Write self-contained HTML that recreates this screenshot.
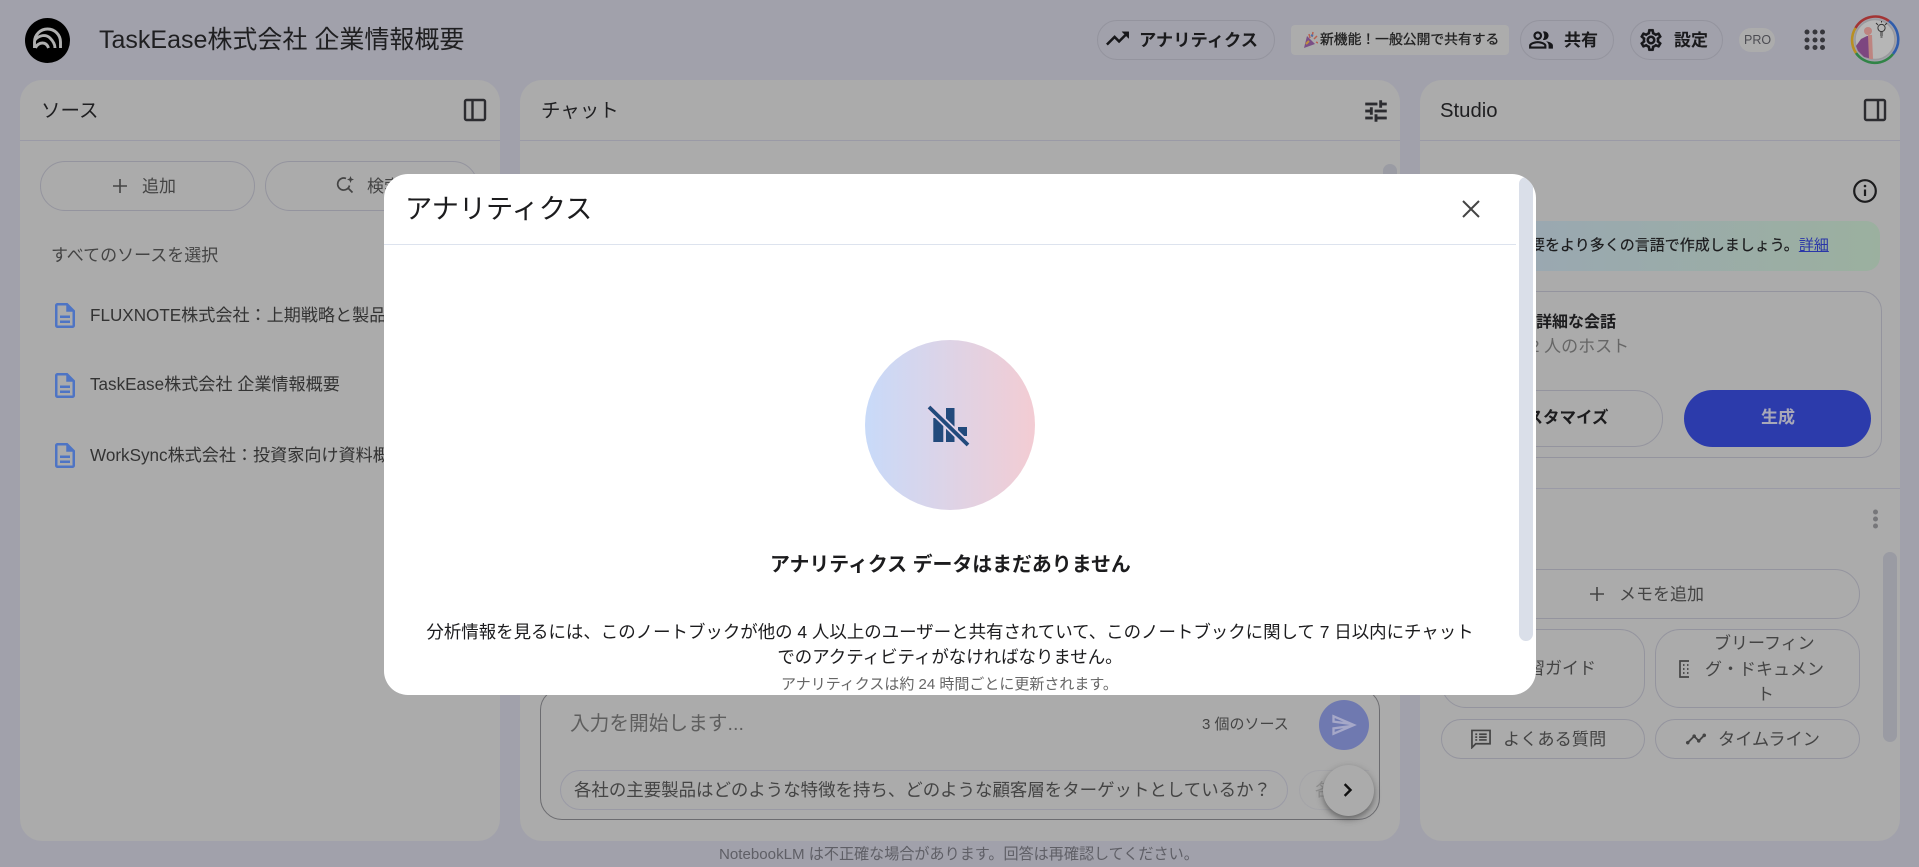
<!DOCTYPE html>
<html lang="ja">
<head>
<meta charset="utf-8">
<title>TaskEase株式会社 企業情報概要</title>
<style>
*{box-sizing:border-box;margin:0;padding:0}
html,body{width:1919px;height:867px;overflow:hidden;background:#a1a1ab;font-family:"Liberation Sans","Noto Sans CJK JP",sans-serif;color:#1c1c1e}
.a{position:absolute}
.t{position:absolute;white-space:nowrap;line-height:24px;height:24px}
.b{position:absolute;border:1px solid #94949e;border-radius:25px}
.p{position:absolute;background:#ababab}
.l{position:absolute;height:1px;background:#9a9aa6}
svg{position:absolute;display:block}
</style>
</head>
<body>
<!-- top bar -->
<svg style="left:25px;top:18px" width="45" height="45" viewBox="0 0 45 45"><circle cx="22.500" cy="22.500" r="22.500" fill="#000"/><g fill="none" stroke="#b0b0b0" stroke-width="2.900"><path d="M9.500 30v-6a13 13 0 0 1 26 0v6"/><path d="M10 22c4-5 11-6 15-2 3 3 5 6 5 10"/><path d="M10.500 30c1-3 4-5 7-5s5 2 6 5"/></g></svg>
<div class="t" style="left:99px;top:28px;font-size:25px;color:#1f1f21">TaskEase株式会社 企業情報概要</div>

<div class="b" style="left:1097px;top:20px;width:178px;height:40px"></div>
<svg style="left:1104px;top:25px;fill:#17171a;stroke:#17171a;stroke-width:.4" width="27" height="27" viewBox="0 0 24 24"><path d="M16 6l2.290 2.290-4.880 4.880-4-4L2 16.590 3.410 18l6-6 4 4 6.300-6.290L22 12V6z"/></svg>
<div class="t" style="left:1139px;top:28px;font-size:17.300px;font-weight:700;color:#1a1a1c">アナリティクス</div>

<div class="a" style="left:1291px;top:25px;width:218px;height:30px;background:#acacac;border-radius:4px"></div>
<svg style="left:1303px;top:31px" width="15" height="18" viewBox="0 0 15 18"><path d="M1 17l3-12 8 8z" fill="#7a4f86"/><path d="M6 3l1 4M10 1l-1 5M14 5l-3 3M13 11l2 1" stroke="#b8604f" stroke-width="1.500"/><path d="M3 13l3-3" stroke="#c09040" stroke-width="2"/><path d="M8 4l2 1" stroke="#4a70b0" stroke-width="2"/></svg>
<div class="t" style="left:1320px;top:28px;font-size:13.800px;color:#222;-webkit-text-stroke:.3px #222">新機能！一般公開で共有する</div>

<div class="b" style="left:1520px;top:20px;width:94px;height:40px"></div>
<svg style="left:1528px;top:27px;fill:#17171a" width="26" height="26" viewBox="0 0 24 24"><path d="M16.670 13.130C18.040 14.060 19 15.320 19 17v3h4v-3c0-2.180-3.570-3.470-6.330-3.870zM15 12c2.210 0 4-1.790 4-4s-1.790-4-4-4c-.47 0-.91.1-1.330.24C14.500 5.270 15 6.580 15 8s-.5 2.730-1.330 3.760c.42.14.86.24 1.330.24zM9 12c2.210 0 4-1.790 4-4s-1.790-4-4-4-4 1.790-4 4 1.790 4 4 4zm0-6c1.100 0 2 .9 2 2s-.9 2-2 2-2-.9-2-2 .9-2 2-2zM9 13c-2.670 0-8 1.340-8 4v3h16v-3c0-2.660-5.330-4-8-4zm6 5H3v-.99C3.200 16.290 6.300 15 9 15s5.800 1.290 6 2v1z"/></svg>
<div class="t" style="left:1564px;top:29px;font-size:17px;font-weight:700;color:#1a1a1c">共有</div>

<div class="b" style="left:1630px;top:20px;width:93px;height:40px"></div>
<svg style="left:1638px;top:27px;fill:#17171a;stroke:#17171a;stroke-width:.35" width="26" height="26" viewBox="0 0 24 24"><path d="M19.430 12.980c.04-.32.07-.64.07-.98 0-.34-.03-.66-.07-.98l2.110-1.650c.19-.15.24-.42.12-.64l-2-3.460c-.09-.16-.26-.25-.44-.25-.06 0-.12.01-.17.03l-2.490 1c-.52-.4-1.080-.73-1.690-.98l-.38-2.650C14.460 2.180 14.250 2 14 2h-4c-.25 0-.46.18-.49.42l-.38 2.650c-.61.25-1.170.59-1.690.98l-2.490-1c-.06-.02-.12-.03-.18-.03-.17 0-.34.09-.43.25l-2 3.460c-.13.22-.07.49.12.64l2.110 1.650c-.04.32-.07.65-.07.98 0 .33.03.66.07.98l-2.110 1.650c-.19.15-.24.42-.12.64l2 3.460c.09.16.26.25.44.25.06 0 .12-.01.17-.03l2.490-1c.52.4 1.080.73 1.690.98l.38 2.650c.03.24.24.42.49.42h4c.25 0 .46-.18.49-.42l.38-2.650c.61-.25 1.170-.59 1.690-.98l2.490 1c.06.02.12.03.18.03.17 0 .34-.09.43-.25l2-3.460c.12-.22.07-.49-.12-.64l-2.110-1.650zm-1.980-1.710c.04.31.05.52.05.73 0 .21-.02.43-.05.73l-.14 1.130.89.7 1.080.84-.7 1.210-1.270-.51-1.040-.42-.9.68c-.43.32-.84.56-1.250.73l-1.060.43-.16 1.130-.2 1.350h-1.400l-.19-1.350-.16-1.130-1.060-.43c-.43-.18-.83-.41-1.230-.71l-.91-.7-1.060.43-1.270.51-.7-1.210 1.080-.84.89-.7-.14-1.130c-.03-.31-.05-.54-.05-.74s.02-.43.05-.73l.14-1.130-.89-.7-1.080-.84.7-1.210 1.270.51 1.040.42.9-.68c.43-.32.84-.56 1.250-.73l1.060-.43.16-1.130.2-1.350h1.390l.19 1.350.16 1.130 1.060.43c.43.18.83.41 1.230.71l.91.7 1.060-.43 1.270-.51.7 1.210-1.070.85-.89.7.14 1.130zM12 8c-2.210 0-4 1.790-4 4s1.790 4 4 4 4-1.790 4-4-1.790-4-4-4zm0 6c-1.100 0-2-.9-2-2s.9-2 2-2 2 .9 2 2-.9 2-2 2z"/></svg>
<div class="t" style="left:1674px;top:29px;font-size:17px;font-weight:700;color:#1a1a1c">設定</div>

<div class="a" style="left:1739px;top:28px;width:36px;height:24px;background:#acacac;border-radius:12px"></div>
<div class="t" style="left:1744px;top:28px;font-size:12.500px;color:#4c4c52">PRO</div>

<svg style="left:1802px;top:27px;fill:#36363c" width="26" height="26" viewBox="0 0 26 26"><circle cx="5" cy="5" r="2.500"/><circle cx="13" cy="5" r="2.500"/><circle cx="20.500" cy="5" r="2.500"/><circle cx="5" cy="13" r="2.500"/><circle cx="13" cy="13" r="2.500"/><circle cx="20.500" cy="13" r="2.500"/><circle cx="5" cy="20.500" r="2.500"/><circle cx="13" cy="20.500" r="2.500"/><circle cx="20.500" cy="20.500" r="2.500"/></svg>

<svg style="left:1850px;top:15px" width="50" height="50" viewBox="0 0 50 50">
<circle cx="25" cy="24.500" r="20" fill="#b6b6b6" stroke="#9a9a9e" stroke-width="1.500"/>
<g fill="none" stroke-width="2.600"><path d="M5.500 13A23 23 0 0 1 39 6" stroke="#a33434"/><path d="M39 6A23 23 0 0 1 43 39" stroke="#2f5cab"/><path d="M43 39A23 23 0 0 1 6 38" stroke="#318447"/><path d="M6 38A23 23 0 0 1 5.500 13" stroke="#b88f22"/></g>
<path d="M6 31L11 24l6-3h4l1 23-8-2-6-6z" fill="#7d4680"/><path d="M18 20h4l1 24h-4z" fill="#bd8480"/><circle cx="18" cy="16" r="4" fill="#bd8480"/>
<g stroke="#333" stroke-width="1" fill="none"><circle cx="31.500" cy="13" r="3.600"/><path d="M30 18h3M30 20h3M30.500 22h2M26 8l2 2M37 8l-2 2M31.500 6v1.500"/></g>
</svg>

<!-- left panel -->
<div class="p" style="left:20px;top:80px;width:480px;height:761px;border-radius:22px"></div>
<div class="l" style="left:20px;top:140px;width:480px"></div>
<div class="t" style="left:41px;top:99px;font-size:19.500px;color:#1f1f21">ソース</div>
<svg style="left:463px;top:98px" width="24" height="24" viewBox="0 0 24 24" fill="none" stroke="#2c2c30" stroke-width="2.400"><rect x="2" y="2" width="20" height="20" rx="1.500"/><path d="M9.500 2v20"/></svg>

<div class="b" style="left:40px;top:161px;width:215px;height:50px"></div>
<svg style="left:112px;top:178px" width="16" height="16" viewBox="0 0 16 16" stroke="#444" stroke-width="1.600"><path d="M8 1v14M1 8h14"/></svg>
<div class="t" style="left:142px;top:175px;font-size:17px;color:#444">追加</div>
<div class="b" style="left:265px;top:161px;width:213px;height:50px"></div>
<svg style="left:336px;top:175px" width="20" height="20" viewBox="0 0 20 20" fill="none" stroke="#444" stroke-width="1.700"><path d="M10 3.500a6 6 0 1 0 3.500 7M11.500 12.500l5 5"/><path d="M14.500 1l1 2.500 2.500 1-2.500 1-1 2.500-1-2.500-2.500-1 2.500-1z" fill="#444" stroke="none"/></svg>
<div class="t" style="left:367px;top:175px;font-size:17px;color:#444">検索</div>
<div class="t" style="left:51px;top:244px;font-size:17px;color:#444">すべてのソースを選択</div>

<svg style="left:55px;top:303px;fill:#4e74c4" width="20" height="25" viewBox="4 2 16 20" preserveAspectRatio="none"><path d="M8 16h8v2H8zm0-4h8v2H8zm6-10H6c-1.100 0-2 .9-2 2v16c0 1.100.89 2 1.990 2H18c1.100 0 2-.9 2-2V8l-6-6zm4 18H6V4h7v5h5v11z"/></svg>
<div class="t" style="left:90px;top:304px;font-size:17.100px;color:#333">FLUXNOTE株式会社：上期戦略と製品計画</div>
<svg style="left:55px;top:373px;fill:#4e74c4" width="20" height="25" viewBox="4 2 16 20" preserveAspectRatio="none"><path d="M8 16h8v2H8zm0-4h8v2H8zm6-10H6c-1.100 0-2 .9-2 2v16c0 1.100.89 2 1.990 2H18c1.100 0 2-.9 2-2V8l-6-6zm4 18H6V4h7v5h5v11z"/></svg>
<div class="t" style="left:90px;top:373px;font-size:17.100px;color:#333">TaskEase株式会社 企業情報概要</div>
<svg style="left:55px;top:443px;fill:#4e74c4" width="20" height="25" viewBox="4 2 16 20" preserveAspectRatio="none"><path d="M8 16h8v2H8zm0-4h8v2H8zm6-10H6c-1.100 0-2 .9-2 2v16c0 1.100.89 2 1.990 2H18c1.100 0 2-.9 2-2V8l-6-6zm4 18H6V4h7v5h5v11z"/></svg>
<div class="t" style="left:90px;top:444px;font-size:17.100px;color:#333">WorkSync株式会社：投資家向け資料概要</div>

<!-- chat panel -->
<div class="p" style="left:520px;top:80px;width:880px;height:761px;border-radius:22px"></div>
<div class="l" style="left:520px;top:140px;width:880px"></div>
<div class="t" style="left:541px;top:99px;font-size:19.500px;color:#1f1f21">チャット</div>
<svg style="left:1362px;top:97px;fill:#2c2c30;stroke:#2c2c30;stroke-width:.45" width="28" height="28" viewBox="0 0 24 24"><path d="M3 17v2h6v-2H3zM3 5v2h10V5H3zm10 16v-2h8v-2h-8v-2h-2v6h2zM7 9v2H3v2h4v2h2V9H7zm14 4v-2H11v2h10zm-6-4h2V7h4V5h-4V3h-2v6z"/></svg>
<div class="a" style="left:1383px;top:164px;width:14px;height:60px;background:#9a9ba3;border-radius:7px"></div>

<div class="a" style="left:540px;top:688px;width:840px;height:132px;border:1px solid #6c6c70;border-radius:22px"></div>
<div class="t" style="left:570px;top:712px;font-size:19.700px;color:#5e5e5e">入力を開始します...</div>
<div class="t" style="left:1202px;top:713px;font-size:15px;color:#444">3 個のソース</div>
<div class="a" style="left:1319px;top:700px;width:50px;height:50px;border-radius:50%;background:#6f79b0"></div>
<svg style="left:1330px;top:711px;fill:#a6a8c8" width="28" height="28" viewBox="0 0 24 24"><path d="M4.010 6.030l7.510 3.220-7.520-1 .01-2.220m7.500 8.720L4 17.970v-2.220l7.510-1M2.010 3L2 10l15 2-15 2 .01 7L23 12 2.010 3z"/></svg>
<div class="a" style="left:560px;top:770px;width:728px;height:40px;border:1px solid #9a9aa5;border-radius:20px"></div>
<div class="t" style="left:574px;top:778px;font-size:17.450px;color:#444">各社の主要製品はどのような特徴を持ち、どのような顧客層をターゲットとしているか？</div>
<div class="a" style="left:1299px;top:770px;width:70px;height:40px;border:1px solid #a4a4a8;border-radius:20px 0 0 20px;border-right:0"></div>
<div class="t" style="left:1315px;top:778px;font-size:17.400px;color:#8f8f8f">各</div>
<div class="a" style="left:1323px;top:765px;width:51px;height:51px;border-radius:50%;background:#ababab;box-shadow:0 3px 7px rgba(40,40,40,.55)"></div>
<svg style="left:1336px;top:778px;fill:#111" width="24" height="24" viewBox="0 0 24 24"><path d="M9.500 5.300L7.800 7l5 5-5 5 1.700 1.700 6.700-6.700z"/></svg>

<!-- studio panel -->
<div class="p" style="left:1420px;top:80px;width:480px;height:761px;border-radius:22px"></div>
<div class="l" style="left:1420px;top:140px;width:480px"></div>
<div class="t" style="left:1440px;top:99px;font-size:20.300px;color:#1f1f21">Studio</div>
<svg style="left:1863px;top:98px" width="24" height="24" viewBox="0 0 24 24" fill="none" stroke="#2c2c30" stroke-width="2.400"><rect x="2" y="2" width="20" height="20" rx="1.500"/><path d="M15 2v20"/></svg>
<svg style="left:1852px;top:178px" width="26" height="26" viewBox="0 0 26 26" fill="none" stroke="#1c1c1e" stroke-width="2.200"><circle cx="13" cy="13" r="10.800"/><path d="M13 11.500v6.500"/><circle cx="13" cy="8" r="1.300" fill="#1c1c1e" stroke="none"/></svg>
<div class="a" style="left:1440px;top:221px;width:440px;height:50px;border-radius:14px;background:linear-gradient(90deg,#9aa6b6,#9bb09f)"></div>
<div class="t" style="left:1530px;top:234px;font-size:15px;color:#1c1c1e;-webkit-text-stroke:.2px #1c1c1e">要をより多くの言語で作成しましょう。<span style="color:#2a36a8;text-decoration:underline;-webkit-text-stroke:0">詳細</span></div>
<div class="a" style="left:1440px;top:291px;width:442px;height:167px;border:1px solid #94949e;border-radius:20px"></div>
<div class="t" style="left:1536px;top:311px;font-size:16px;font-weight:700;color:#1c1c1e">詳細な会話</div>
<div class="t" style="left:1530px;top:335px;font-size:17px;color:#666">2 人のホスト</div>
<div class="b" style="left:1455px;top:390px;width:208px;height:57px;border-radius:28px"></div>
<div class="t" style="left:1510px;top:406px;font-size:16.500px;font-weight:700;color:#1c1c1e">カスタマイズ</div>
<div class="a" style="left:1684px;top:390px;width:187px;height:57px;border-radius:29px;background:#2c3bab"></div>
<div class="t" style="left:1761px;top:406px;font-size:17px;font-weight:700;color:#a8a8b8">生成</div>
<div class="l" style="left:1420px;top:488px;width:480px"></div>
<svg style="left:1871px;top:507px;fill:#77777a" width="9" height="24" viewBox="0 0 9 24"><circle cx="4.500" cy="5" r="2.500"/><circle cx="4.500" cy="12" r="2.500"/><circle cx="4.500" cy="19" r="2.500"/></svg>
<div class="a" style="left:1883px;top:552px;width:14px;height:190px;background:#9a9ba3;border-radius:7px"></div>

<div class="b" style="left:1440px;top:569px;width:420px;height:50px"></div>
<svg style="left:1589px;top:586px" width="16" height="16" viewBox="0 0 16 16" stroke="#444" stroke-width="1.600"><path d="M8 1v14M1 8h14"/></svg>
<div class="t" style="left:1619px;top:583px;font-size:17px;color:#444">メモを追加</div>
<div class="b" style="left:1441px;top:629px;width:204px;height:79px"></div>
<div class="t" style="left:1511px;top:657px;font-size:17px;color:#444">学習ガイド</div>
<div class="b" style="left:1655px;top:629px;width:205px;height:79px"></div>
<svg style="left:1679px;top:660px" width="12" height="18" viewBox="0 0 12 18" fill="none" stroke="#444" stroke-width="1.700"><path d="M10 1H1v16h9"/><path d="M4 5h1.500M8 5h1.500M4 9h1.500M8 9h1.500M4 13h1.500M8 13h1.500"/></svg>
<div class="t" style="left:1714px;top:632px;font-size:17px;color:#444">ブリーフィン</div>
<div class="t" style="left:1705px;top:658px;font-size:17px;color:#444">グ・ドキュメン</div>
<div class="t" style="left:1757px;top:683px;font-size:17px;color:#444">ト</div>
<div class="b" style="left:1441px;top:719px;width:204px;height:40px"></div>
<svg style="left:1471px;top:729px" width="20" height="20" viewBox="0 0 21 21" fill="none" stroke="#444" stroke-width="1.800"><path d="M1 1.500h19v14H5l-4 4z"/><path d="M4.500 5.500h2M8.500 5.500h8M4.500 8.500h2M8.500 8.500h8M4.500 11.500h2M8.500 11.500h8"/></svg>
<div class="t" style="left:1503px;top:727px;font-size:17.200px;color:#444">よくある質問</div>
<div class="b" style="left:1655px;top:719px;width:205px;height:40px"></div>
<svg style="left:1685px;top:728px;fill:#444" width="22" height="22" viewBox="0 0 24 24"><path d="M23 8c0 1.100-.9 2-2 2-.18 0-.35-.02-.51-.07l-3.560 3.550c.05.16.07.34.07.52 0 1.100-.9 2-2 2s-2-.9-2-2c0-.18.02-.36.07-.52l-2.550-2.550c-.16.05-.34.07-.52.07s-.36-.02-.52-.07l-4.550 4.560c.05.16.07.33.07.51 0 1.100-.9 2-2 2s-2-.9-2-2 .9-2 2-2c.18 0 .35.02.51.07l4.560-4.550C8.020 9.360 8 9.180 8 9c0-1.100.9-2 2-2s2 .9 2 2c0 .18-.02.36-.07.52l2.550 2.550c.16-.05.34-.07.52-.07s.36.02.52.07l3.550-3.560C19.020 8.350 19 8.180 19 8c0-1.100.9-2 2-2s2 .9 2 2z"/></svg>
<div class="t" style="left:1718px;top:727px;font-size:17.200px;color:#444">タイムライン</div>

<!-- footer -->
<div class="t" style="left:719px;top:843px;font-size:15.100px;color:#5f5f66">NotebookLM は不正確な場合があります。回答は再確認してください。</div>

<!-- modal -->
<div class="a" style="left:384px;top:174px;width:1152px;height:521px;background:#fff;border-radius:24px;overflow:hidden">
  <div class="a" style="left:1135px;top:3px;width:14px;height:464px;background:#dadfe9;border-radius:7px"></div>
  <div class="a" style="left:0;top:70px;width:1132px;height:1px;background:#dde3ee"></div>
  <div class="t" style="left:21px;top:23px;font-size:27.200px;line-height:24px;color:#1c1c1e">アナリティクス</div>
  <svg style="left:1077px;top:25px" width="20" height="20" viewBox="0 0 20 20" stroke="#444" stroke-width="2"><path d="M2 2l16 16M18 2L2 18"/></svg>
  <div class="a" style="left:481px;top:166px;width:170px;height:170px;border-radius:50%;background:linear-gradient(90deg,#c8daf9,#f3ccd3)"></div>
  <svg style="left:541px;top:230px" width="50" height="45" viewBox="0 0 50 45">
    <rect x="8.300" y="14" width="10" height="24" fill="#224a7c"/><rect x="21" y="4" width="8.500" height="34" fill="#224a7c"/><rect x="33" y="23" width="9" height="9" fill="#224a7c"/>
    <path d="M4 3l39 38" stroke="#e2d4ea" stroke-width="7.500"/><path d="M4 3l39 38" stroke="#224a7c" stroke-width="3.800"/>
  </svg>
  <div class="t" style="left:386px;top:379px;font-size:19.900px;font-weight:700;color:#1c1c1e">アナリティクス データはまだありません</div>
  <div class="a" style="left:20px;top:446px;width:1092px;text-align:center;font-size:17.460px;line-height:25px;color:#1c1c1e;white-space:nowrap">分析情報を見るには、このノートブックが他の 4 人以上のユーザーと共有されていて、このノートブックに関して 7 日以内にチャット<br>でのアクティビティがなければなりません。</div>
  <div class="t" style="left:397px;top:499px;font-size:15px;color:#666">アナリティクスは約 24 時間ごとに更新されます。</div>
</div>
</body>
</html>
